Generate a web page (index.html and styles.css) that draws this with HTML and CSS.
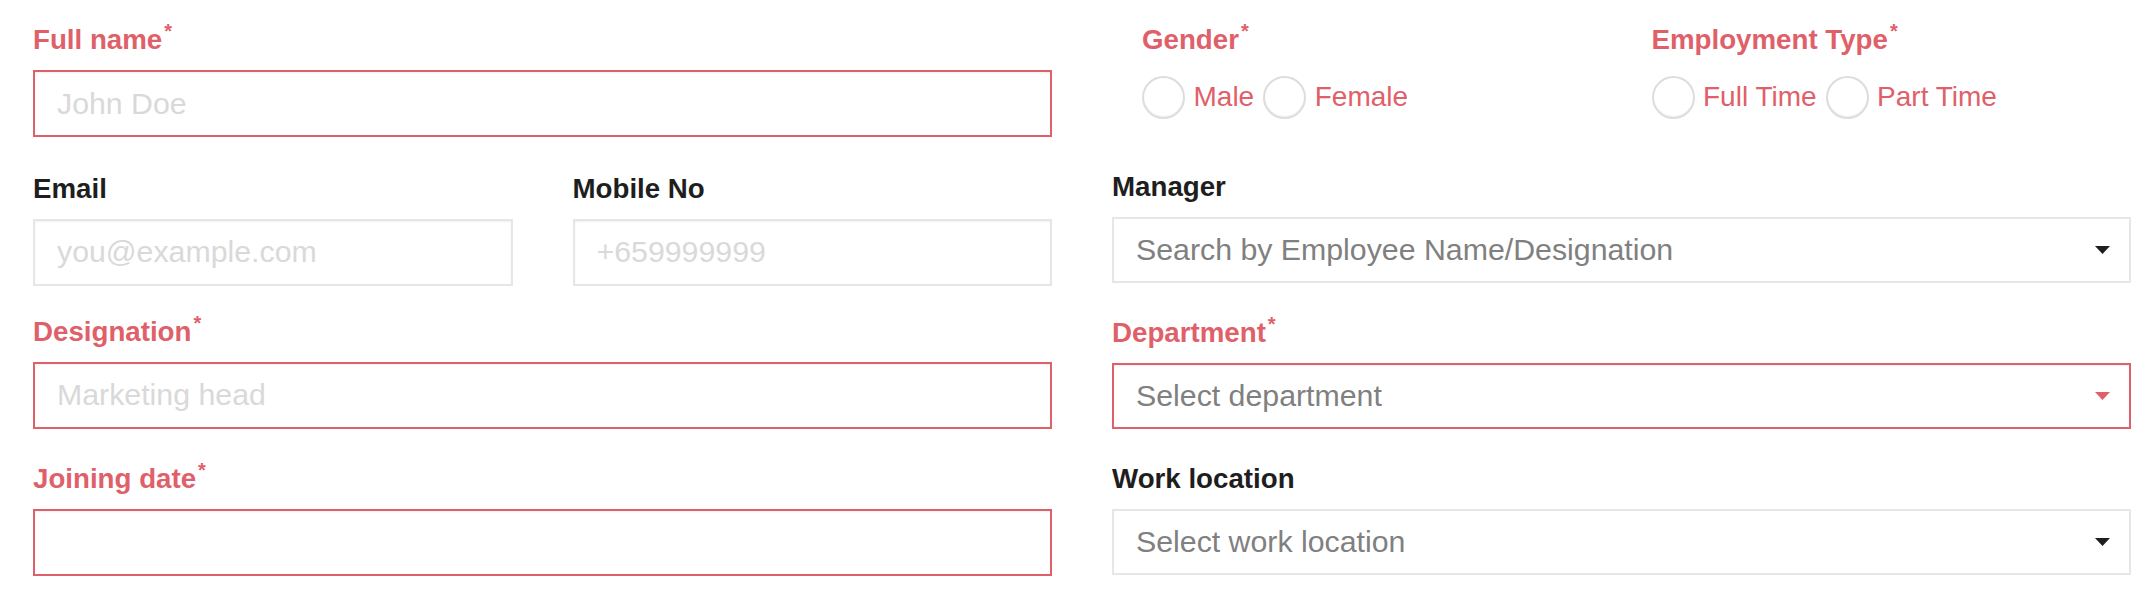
FILE: index.html
```html
<!DOCTYPE html>
<html lang="en">
<head>
<meta charset="utf-8">
<title>Employee form</title>
<link rel="stylesheet" href="styles.css">
</head>
<body>
<form class="form">
  <div class="col">
    <div class="field field--first">
      <label class="label label--req">Full name<span class="star">*</span></label>
      <input class="input input--error" placeholder="John Doe">
    </div>
    <div class="field field--email pair">
      <div class="sub">
        <label class="label">Email</label>
        <input class="input" placeholder="you@example.com">
      </div>
      <div class="sub">
        <label class="label">Mobile No</label>
        <input class="input" placeholder="+659999999">
      </div>
    </div>
    <div class="field field--desig">
      <label class="label label--req">Designation<span class="star">*</span></label>
      <input class="input input--error" placeholder="Marketing head">
    </div>
    <div class="field field--join">
      <label class="label label--req">Joining date<span class="star">*</span></label>
      <input class="input input--error" placeholder="">
    </div>
  </div>

  <div class="col">
    <div class="field field--first pair">
      <div class="group group--gender">
        <label class="label label--req">Gender<span class="star">*</span></label>
        <div class="radios">
          <span class="option"><span class="radio"></span><span class="opt-text">Male</span></span>
          <span class="option"><span class="radio"></span><span class="opt-text">Female</span></span>
        </div>
      </div>
      <div class="group">
        <label class="label label--req">Employment Type<span class="star">*</span></label>
        <div class="radios">
          <span class="option"><span class="radio"></span><span class="opt-text">Full Time</span></span>
          <span class="option"><span class="radio"></span><span class="opt-text">Part Time</span></span>
        </div>
      </div>
    </div>
    <div class="field field--manager">
      <label class="label">Manager</label>
      <div class="select">
        <span class="select-text">Search by Employee Name/Designation</span>
        <svg class="caret" width="15" height="8" viewBox="0 0 15 8"><path d="M0 0H15L7.5 8Z"/></svg>
      </div>
    </div>
    <div class="field field--dept">
      <label class="label label--req">Department<span class="star">*</span></label>
      <div class="select select--error">
        <span class="select-text">Select department</span>
        <svg class="caret" width="15" height="8" viewBox="0 0 15 8"><path d="M0 0H15L7.5 8Z"/></svg>
      </div>
    </div>
    <div class="field field--work">
      <label class="label">Work location</label>
      <div class="select">
        <span class="select-text">Select work location</span>
        <svg class="caret" width="15" height="8" viewBox="0 0 15 8"><path d="M0 0H15L7.5 8Z"/></svg>
      </div>
    </div>
  </div>
</form>
</body>
</html>
```

FILE: styles.css
```css
html, body {
  margin: 0;
  padding: 0;
  background: #ffffff;
}

body {
  font-family: "Liberation Sans", Arial, Helvetica, sans-serif;
  color: #1e1e1e;
}

.form {
  display: grid;
  grid-template-columns: 1019px 1019px;
  column-gap: 60px;
  padding: 24px 0 0 33px;
  align-items: start;
}

.col {
  display: flex;
  flex-direction: column;
}

.field {
  display: flex;
  flex-direction: column;
}

.field--email { margin-top: 35.5px; }
.field--desig { margin-top: 30px; }
.field--join { margin-top: 34.5px; }
.field--manager { margin-top: 52px; }
.field--dept { margin-top: 34px; }
.field--work { margin-top: 34px; }

.pair {
  display: grid;
  grid-template-columns: 1fr 1fr;
  column-gap: 60px;
}

.sub, .group {
  display: flex;
  flex-direction: column;
}

.group--gender {
  padding-left: 30px;
}

.label {
  display: block;
  font-size: 27.7px;
  line-height: 32px;
  font-weight: 700;
  color: #1e1e1e;
  margin: 0 0 14px 0;
  white-space: nowrap;
}

.label--req {
  color: #e0606a;
}

.star {
  font-size: 20px;
  line-height: 0;
  vertical-align: 11px;
  margin-left: 2px;
  color: #e0606a;
}

.input {
  box-sizing: border-box;
  display: block;
  width: 100%;
  height: 67px;
  margin: 0;
  padding: 0 20px 0 22px;
  border: 2px solid #e6e6e6;
  border-radius: 0;
  background: #fff;
  font-family: inherit;
  font-size: 30.3px;
  color: #333;
  outline: none;
  box-shadow: inset 0 1px 2px rgba(0, 0, 0, 0.06);
}

.input::placeholder {
  color: #d9d9d9;
  opacity: 1;
}

.input--error {
  border-color: #e0606a;
}

.radios {
  display: flex;
  align-items: center;
  gap: 9px;
  margin-top: 6px;
}

.option {
  display: flex;
  align-items: center;
  gap: 8.5px;
}

.radio {
  box-sizing: border-box;
  width: 43px;
  height: 43px;
  border-radius: 50%;
  border: 2px solid #dddddd;
  box-shadow: inset 0 -1px 1px rgba(0, 0, 0, 0.06);
  background: #fff;
  flex: none;
}

.opt-text {
  font-size: 28px;
  line-height: 32px;
  color: #e0606a;
  white-space: nowrap;
  position: relative;
  top: -1px;
}

.select {
  box-sizing: border-box;
  display: flex;
  align-items: center;
  justify-content: space-between;
  height: 66px;
  padding: 0 19px 0 22px;
  border: 2px solid #e6e6e6;
  background: #fff;
}

.select--error {
  border-color: #e0606a;
  box-shadow: inset 0 1px 2px rgba(0, 0, 0, 0.06);
}

.select-text {
  font-size: 30.3px;
  color: #808080;
  white-space: nowrap;
}

.caret {
  display: block;
  fill: #1e1e1e;
  flex: none;
}

.select--error .caret {
  fill: #e0606a;
}
```
